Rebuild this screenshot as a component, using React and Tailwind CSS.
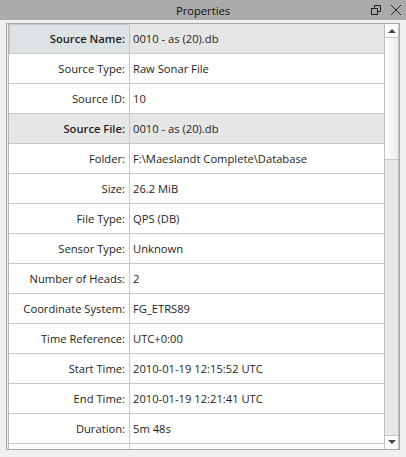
import React from "react";

const rows = [
  { label: "Source Name:", value: "0010 - as (20).db", head: true, selected: true },
  { label: "Source Type:", value: "Raw Sonar File" },
  { label: "Source ID:", value: "10" },
  { label: "Source File:", value: "0010 - as (20).db", head: true },
  { label: "Folder:", value: "F:\\Maeslandt Complete\\Database" },
  { label: "Size:", value: "26.2 MiB" },
  { label: "File Type:", value: "QPS (DB)" },
  { label: "Sensor Type:", value: "Unknown" },
  { label: "Number of Heads:", value: "2" },
  { label: "Coordinate System:", value: "FG_ETRS89" },
  { label: "Time Reference:", value: "UTC+0:00" },
  { label: "Start Time:", value: "2010-01-19 12:15:52 UTC" },
  { label: "End Time:", value: "2010-01-19 12:21:41 UTC" },
  { label: "Duration:", value: "5m 48s" },
  { label: "", value: "" },
];

const Row = ({ row }) => {
  const bg = row.head ? "bg-[#e6e6e6]" : "bg-white";
  return (
    <div className={"flex h-[30px] shrink-0 border-b border-[#c8c8c8] " + bg}>
      <div
        className={
          "w-[121px] shrink-0 flex items-center justify-end pr-[4px] pt-px border-r border-[#c8c8c8] " +
          (row.selected ? "bg-[#dde2e5] border border-[#b5b5b5] -mb-px" : "") +
          (row.head ? " font-semibold" : "")
        }
      >
        {row.label}
      </div>
      <div className="flex-1 flex items-center pl-[3px] pt-px">{row.value}</div>
    </div>
  );
};

const App = () => {
  return (
    <div
      className="w-[406px] h-[457px] bg-[#f0f0f0] flex flex-col text-[11.2px] text-[#1e1e1e] overflow-hidden"
      style={{ fontFamily: "'Open Sans', 'Noto Sans', sans-serif" }}
    >
      <div className="h-[20px] shrink-0 bg-[#ababab] flex items-center relative">
        <div className="flex-1 text-center text-[#111] pt-[2px]">Properties</div>
        <div className="absolute right-[4px] top-[4px] flex items-center gap-[8px]">
          <svg width="12" height="12" viewBox="0 0 12 12" fill="none" stroke="#222" strokeWidth="1">
            <rect x="1.5" y="4.5" width="6" height="6" />
            <path d="M4.5 4.5V1.5h6v6h-3" />
          </svg>
          <svg width="12" height="12" viewBox="0 0 12 12" fill="none" stroke="#222" strokeWidth="1">
            <path d="M1 1l10 10M11 1L1 11" />
          </svg>
        </div>
      </div>
      <div className="flex-1 min-h-0 flex px-[6px] pt-[3px] pb-[7px]">
        <div className="flex-1 min-h-0 flex border border-[#a8a8a8] bg-[#f0f0f0] pl-px">
          <div className="flex-1 min-h-0 flex flex-col overflow-hidden border-l border-[#b5b5b5]">
            {rows.map((r, i) => (
              <Row key={i} row={r} />
            ))}
          </div>
          <div className="w-[15px] shrink-0 flex flex-col bg-[#e8e8e8] border-x border-[#c0c0c0]">
            <div className="h-[14px] shrink-0 bg-white border-b border-[#c8c8c8] flex items-center justify-center">
              <svg width="8" height="5" viewBox="0 0 8 5">
                <path d="M0 5L4 1L8 5Z" fill="#444" />
              </svg>
            </div>
            <div className="h-[122px] shrink-0 bg-gradient-to-r from-white to-[#ececec] border-b border-[#c8c8c8]" />
            <div className="flex-1" />
            <div className="h-[14px] shrink-0 bg-white border-t border-[#c8c8c8] flex items-center justify-center">
              <svg width="8" height="5" viewBox="0 0 8 5">
                <path d="M0 0L4 4L8 0Z" fill="#444" />
              </svg>
            </div>
          </div>
        </div>
      </div>
    </div>
  );
};

export default App;
